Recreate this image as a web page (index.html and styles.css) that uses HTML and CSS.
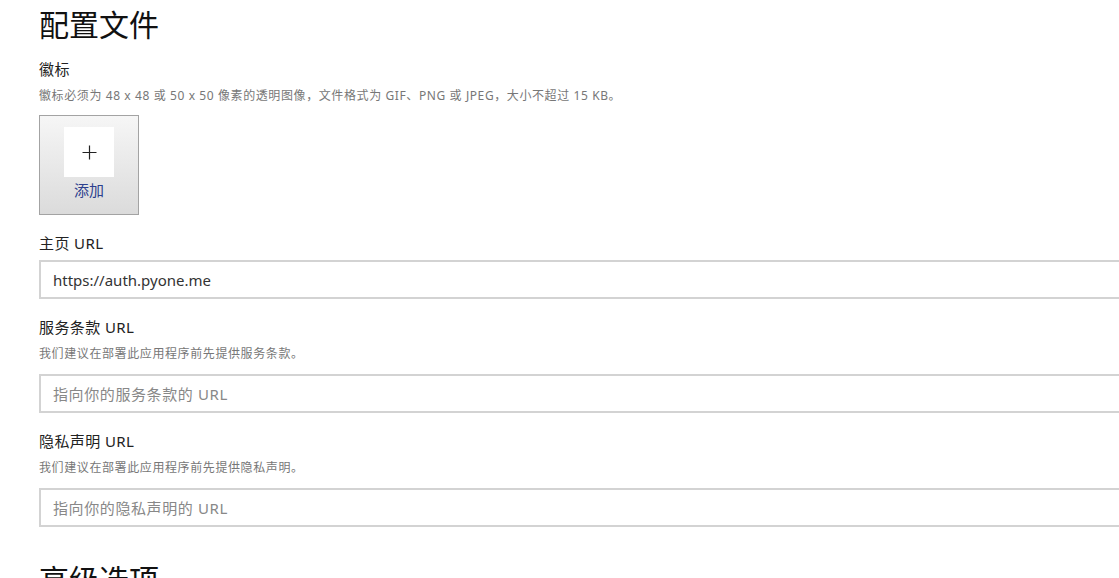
FILE: index.html
```html
<!DOCTYPE html>
<html lang="zh-CN">
<head>
    <meta charset="UTF-8">
    <title>配置文件</title>
    <link rel="stylesheet" href="styles.css">
</head>
<body>
    <div class="page">
        <h1 class="section-title">配置文件</h1>

        <div class="field">
            <div class="field-label">徽标</div>
            <div class="field-hint">徽标必须为 48 x 48 或 50 x 50 像素的透明图像，文件格式为 GIF、PNG 或 JPEG，大小不超过 15 KB。</div>
            <button type="button" class="logo-btn">
                <span class="logo-slot">
                    <svg width="15" height="15" viewBox="0 0 15 15">
                        <path d="M7.5 0.5V14.5M0.5 7.5H14.5" stroke="#222" stroke-width="1.2" fill="none"/>
                    </svg>
                </span>
                <span class="logo-text">添加</span>
            </button>
        </div>

        <div class="field">
            <label class="field-label" for="home">主页 URL</label>
            <input class="url-input" type="text" id="home" value="https://auth.pyone.me">
        </div>

        <div class="field">
            <label class="field-label" for="terms">服务条款 URL</label>
            <div class="field-hint">我们建议在部署此应用程序前先提供服务条款。</div>
            <input class="url-input" type="text" id="terms" placeholder="指向你的服务条款的 URL">
        </div>

        <div class="field">
            <label class="field-label" for="privacy">隐私声明 URL</label>
            <div class="field-hint">我们建议在部署此应用程序前先提供隐私声明。</div>
            <input class="url-input" type="text" id="privacy" placeholder="指向你的隐私声明的 URL">
        </div>

        <h2 class="section-title advanced">高级选项</h2>
    </div>
</body>
</html>
```

FILE: styles.css
```css
/* Page base */
body {
    margin: 0;
    padding: 0;
    background: #fff;
    color: #1a1a1a;
    font-family: "Segoe UI", "Noto Sans", "Noto Sans CJK SC", sans-serif;
    overflow: hidden;
}

.page {
    padding: 7px 0 0 39px;
    width: 1200px;
}

/* Headings */
.section-title {
    margin: 0;
    font-size: 30px;
    line-height: 36px;
    font-weight: normal;
    color: #111;
}

.section-title.advanced {
    margin-top: 35px;
}

/* Fields */
.field {
    display: flex;
    flex-direction: column;
    align-items: flex-start;
    margin-top: 16px;
}

.field + .field {
    margin-top: 18px;
}

.field-label {
    font-size: 15px;
    line-height: 20px;
    letter-spacing: 0.4px;
    color: #222;
}

.field-hint {
    margin-top: 8px;
    font-size: 12px;
    line-height: 18px;
    letter-spacing: 0.6px;
    color: #777;
}

/* Logo picker */
.logo-btn {
    margin-top: 10px;
    width: 100px;
    height: 100px;
    padding: 11px 0 0;
    border: 1px solid #a3a3a3;
    background: linear-gradient(#f6f6f6, #dbdbdb);
    display: flex;
    flex-direction: column;
    align-items: center;
    font-family: inherit;
    cursor: pointer;
}

.logo-slot {
    width: 50px;
    height: 50px;
    background: #fff;
    display: flex;
    align-items: center;
    justify-content: center;
}

.logo-text {
    margin-top: 3px;
    font-size: 15px;
    line-height: 20px;
    color: #2d3f8e;
}

/* URL inputs */
.url-input {
    box-sizing: border-box;
    margin-top: 7px;
    width: 1110px;
    height: 39px;
    padding: 0 12px;
    border: 2px solid #d3d3d3;
    font-family: inherit;
    font-size: 15px;
    color: #333;
    outline: none;
}

.field-hint + .url-input {
    margin-top: 11px;
}

.url-input::placeholder {
    color: #888;
    letter-spacing: 0.6px;
}
```
